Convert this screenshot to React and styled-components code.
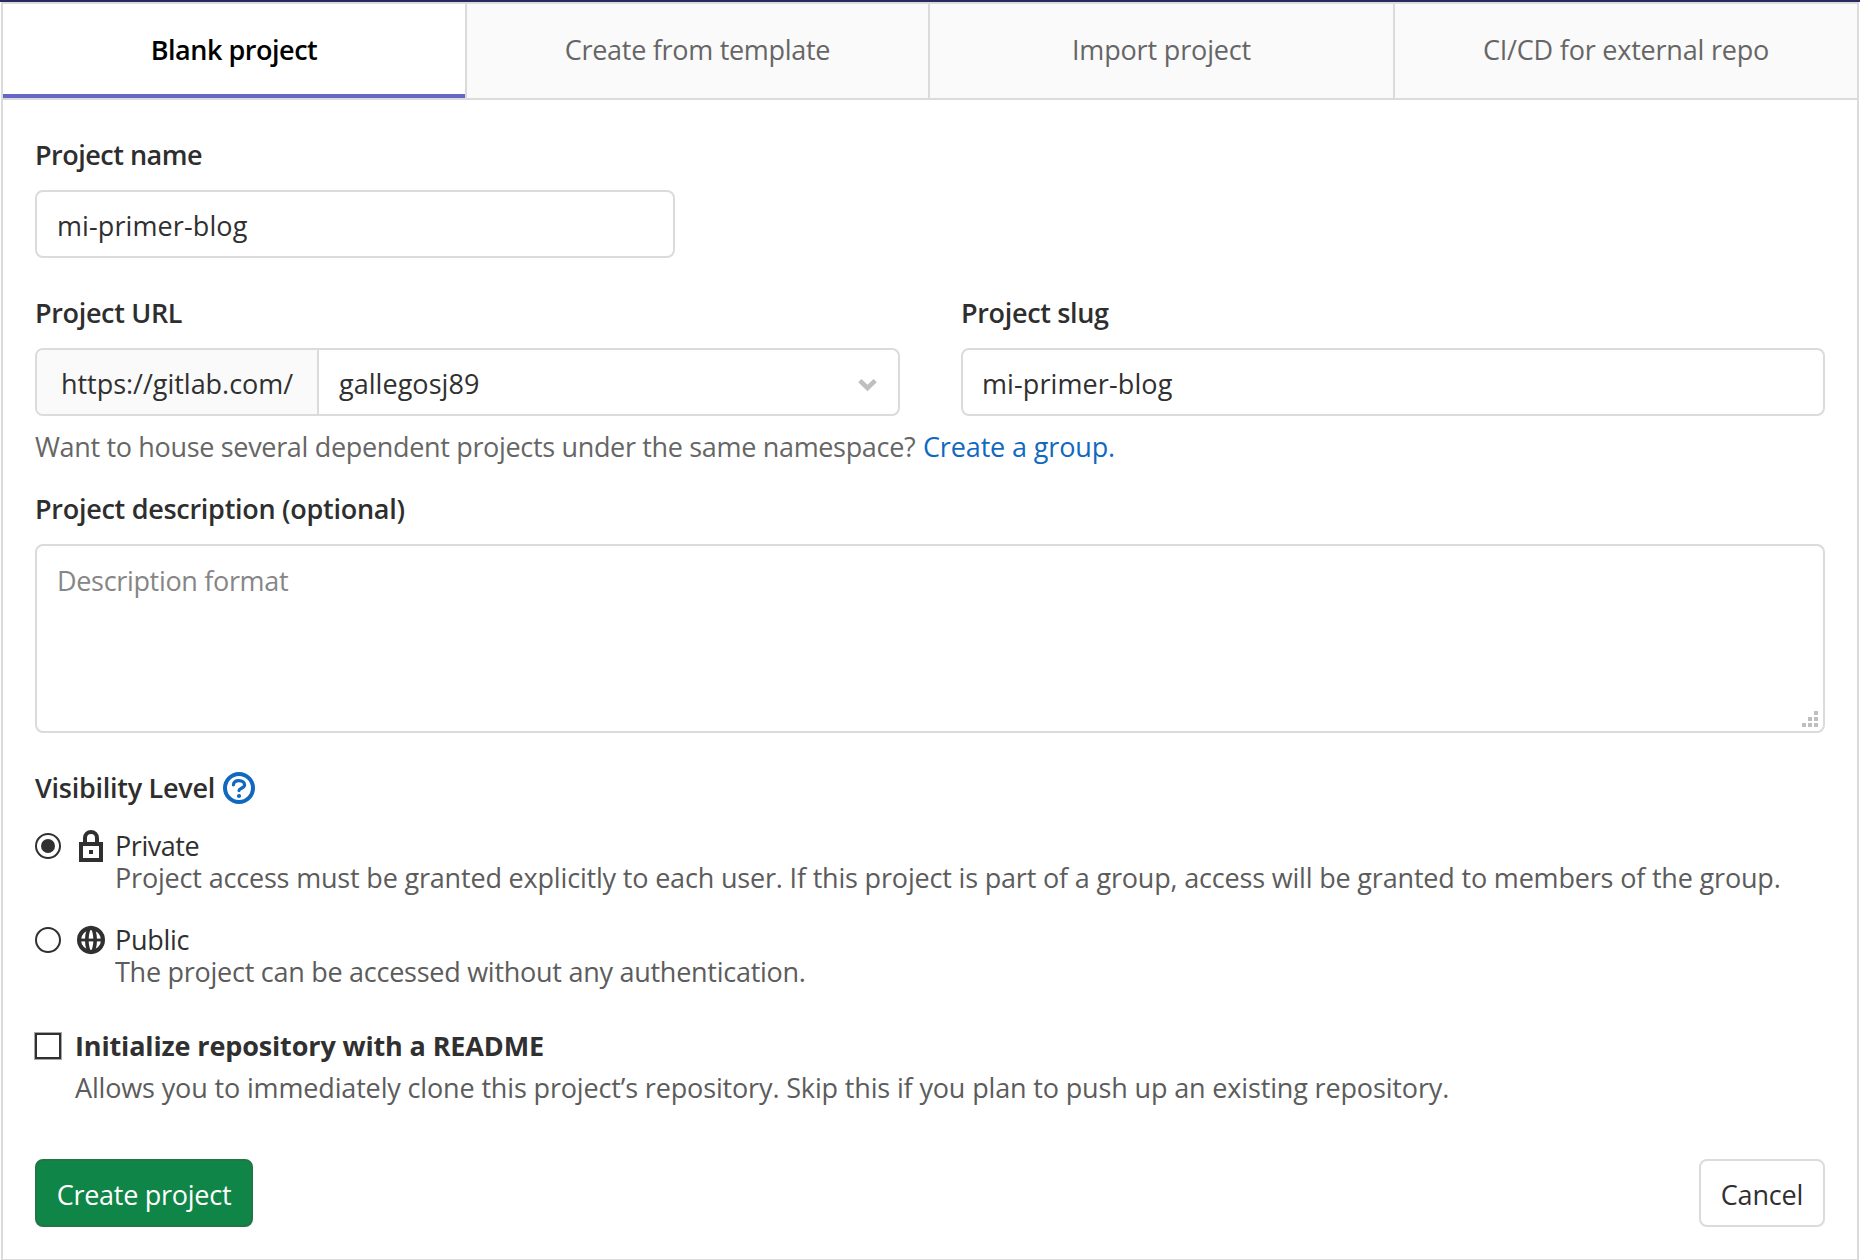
import React from "react";
import styled, { createGlobalStyle } from "styled-components";

const GlobalStyle = createGlobalStyle`
  *, *::before, *::after { box-sizing: border-box; }
  body {
    margin: 0;
    background: #fff;
    color: #303030;
    font-family: "Open Sans", "Noto Sans", sans-serif;
    font-size: 27px;
    line-height: 39px;
    white-space: nowrap;
  }
  input, textarea, button { font: inherit; color: inherit; }
`;

const spacing = (p) => `${p.$track || 0}px`;

const TopBar = styled.div`
  height: 2px;
  background: #292961;
`;
const Panel = styled.main`
  margin: 0 1px;
  height: 1258px;
  border: 2px solid #dbdbdb;
  border-bottom-width: 1px;
`;
const Tabs = styled.nav`
  display: grid;
  grid-template-columns: 464px 463px 465px 462px;
  height: 96px;
  border-bottom: 2px solid #dbdbdb;
`;
const Tab = styled.a`
  display: flex;
  justify-content: center;
  padding-top: 26px;
  border-right: 2px solid #dbdbdb;
  background: ${(p) => (p.$active ? "#fff" : "#fafafa")};
  color: ${(p) => (p.$active ? "#000" : "#666")};
  font-weight: ${(p) => (p.$active ? 600 : 400)};
  letter-spacing: ${spacing};
  box-shadow: ${(p) => (p.$active ? "inset 0 -4px #6666c4" : "none")};
  &:last-child { border-right: 0; }
`;
const Form = styled.form`
  padding: 35px 32px 0;
`;
const Field = styled.div`
  display: flex;
  flex-direction: column;
  gap: 16px;
  width: ${(p) => (p.$width ? `${p.$width}px` : "auto")};
`;
const Columns = styled.div`
  display: flex;
  justify-content: space-between;
  margin-top: 35px;
`;
const Label = styled.label`
  font-weight: 600;
  color: #2e2e2e;
  letter-spacing: ${spacing};
`;
const Input = styled.input`
  width: 100%;
  height: 68px;
  padding: 14px 19px 11px ${(p) => p.$indent || 19}px;
  border: 2px solid #dbdbdb;
  border-radius: 8px;
  background: #fff;
  outline: none;
  letter-spacing: ${spacing};
`;
const Group = styled.div`
  display: flex;
  height: 68px;
  border: 2px solid #dbdbdb;
  border-radius: 8px;
  overflow: hidden;
`;
const Prefix = styled.span`
  width: 282px;
  padding: 14px 0 0 24px;
  border-right: 2px solid #dbdbdb;
  background: #fafafa;
  letter-spacing: ${spacing};
`;
const Select = styled.div`
  flex: 1;
  display: flex;
  justify-content: space-between;
  padding: 14px 21px 0 20px;
  letter-spacing: ${spacing};
  svg { margin-top: 15px; }
`;
const Help = styled.p`
  margin: 11px 0 23px;
  color: #666;
  letter-spacing: ${spacing};
`;
const Link = styled.a`
  margin-left: 1px;
  color: #1068bf;
  letter-spacing: ${spacing};
`;
const AreaWrap = styled.div`
  position: relative;
  display: flex;
`;
const Area = styled.textarea`
  width: 100%;
  height: 189px;
  padding: 15px 20px;
  border: 2px solid #dbdbdb;
  border-radius: 8px;
  resize: none;
  outline: none;
  letter-spacing: ${spacing};
  &::placeholder { color: #868686; opacity: 1; }
`;
const Grip = styled.svg`
  position: absolute;
  right: 7px;
  bottom: 6px;
  fill: #bfbfbf;
`;
const LevelHead = styled.div`
  display: flex;
  gap: 8px;
  margin-top: 35px;
  svg { margin-top: 4px; }
`;
const Option = styled.label`
  display: grid;
  grid-template-columns: 40px 40px 1fr;
  margin-top: ${(p) => p.$top}px;
`;
const Radio = styled.span`
  display: grid;
  place-items: center;
  width: 26px;
  height: 26px;
  margin-top: 3px;
  border: 2px solid #303030;
  border-radius: 50%;
  &::after {
    content: "";
    width: 14px;
    height: 14px;
    border-radius: 50%;
    background: ${(p) => (p.$checked ? "#303030" : "transparent")};
  }
`;
const OptionText = styled.span`
  display: grid;
  gap: 1px;
  line-height: 31px;
`;
const Line = styled.span`
  color: ${(p) => (p.$muted ? "#5c5c5c" : "#303030")};
  font-weight: ${(p) => (p.$bold ? 700 : 400)};
  letter-spacing: ${spacing};
`;
const Readme = styled.label`
  display: grid;
  grid-template-columns: 40px 1fr;
  margin-top: 39px;
`;
const Checkbox = styled.span`
  width: 28px;
  height: 28px;
  margin: 6px 0 0 -1px;
  border: 1px solid #a6a6a6;
  box-shadow: inset 0 0 0 2px #303030;
  background: #fff;
`;
const ReadmeText = styled.span`
  display: grid;
  gap: 3px;
`;
const Actions = styled.div`
  display: flex;
  justify-content: space-between;
  margin-top: 52px;
`;
const Button = styled.button`
  width: ${(p) => p.$width}px;
  height: 68px;
  padding: 3px 0 0;
  border: 2px solid ${(p) => (p.$primary ? "#217645" : "#dbdbdb")};
  border-radius: 8px;
  background: ${(p) => (p.$primary ? "#108548" : "#fff")};
  color: ${(p) => (p.$primary ? "#fff" : "#303030")};
  letter-spacing: ${spacing};
`;

const Chevron = () => (
  <svg width="19" height="13" viewBox="0 0 19 13" fill="none" stroke="#bfbfbf" strokeWidth="4.6">
    <path d="M1.8 1.7 9.5 9 17.2 1.7" />
  </svg>
);
const QuestionIcon = () => (
  <svg width="32" height="32" viewBox="0 0 16 16" fill="none" stroke="#1068bf">
    <circle cx="8" cy="8" r="7" strokeWidth="2" />
    <path d="M5.2 6.4C5.3 5.1 6.4 4.3 8 4.3s2.8.9 2.8 2.2C10.8 8.1 8 8.1 8 9.3" strokeWidth="1.6" strokeLinecap="round" />
    <circle cx="8" cy="12" r="1.05" fill="#1068bf" stroke="none" />
  </svg>
);
const LockIcon = () => (
  <svg width="32" height="32" viewBox="0 0 16 16" fill="none" stroke="#303030" strokeWidth="2">
    <path d="M3 7h10v8H3zM5 7V4a3 3 0 0 1 6 0v3" />
    <path d="M7 10h2v2H7z" fill="#303030" stroke="none" />
  </svg>
);
const GlobeIcon = () => (
  <svg width="32" height="32" viewBox="0 0 16 16" fill="none" stroke="#303030">
    <circle cx="8" cy="8" r="6" strokeWidth="2" />
    <ellipse cx="8" cy="8" rx="2.1" ry="6.2" strokeWidth="1.8" />
    <path d="M2 8h12" strokeWidth="1.4" />
  </svg>
);

const tabs = [
  { text: "Blank project", track: -0.47, active: true },
  { text: "Create from template", track: -0.295 },
  { text: "Import project", track: -0.15 },
  { text: "CI/CD for external repo", track: -0.21 },
];

export default function App() {
  return (
    <>
      <GlobalStyle />
      <TopBar />
      <Panel>
        <Tabs>
          {tabs.map((t) => (
            <Tab key={t.text} $active={t.active} $track={t.track}>{t.text}</Tab>
          ))}
        </Tabs>
        <Form>
          <Field $width={640}>
            <Label $track={-0.5}>Project name</Label>
            <Input $track={0.105} $indent={20} defaultValue="mi-primer-blog" />
          </Field>
          <Columns>
            <Field $width={865}>
              <Label $track={-0.34}>Project URL</Label>
              <Group>
                <Prefix $track={-0.03}>https://gitlab.com/</Prefix>
                <Select $track={0.04}>
                  <span>gallegosj89</span>
                  <Chevron />
                </Select>
              </Group>
            </Field>
            <Field $width={864}>
              <Label $track={-0.33}>Project slug</Label>
              <Input $track={0.105} defaultValue="mi-primer-blog" />
            </Field>
          </Columns>
          <Help $track={-0.33}>
            Want to house several dependent projects under the same namespace?{" "}
            <Link $track={-0.14}>Create a group.</Link>
          </Help>
          <Field>
            <Label $track={-0.28}>Project description (optional)</Label>
            <AreaWrap>
              <Area $track={-0.33} placeholder="Description format" />
              <Grip width="16" height="16" viewBox="0 0 16 16">
                <path d="M12 0h4v4h-4zM6 6h4v4H6zM12 6h4v4h-4zM0 12h4v4H0zM6 12h4v4H6zM12 12h4v4h-4z" />
              </Grip>
            </AreaWrap>
          </Field>
          <LevelHead>
            <Label $track={-0.27}>Visibility Level</Label>
            <QuestionIcon />
          </LevelHead>
          <Option $top={23}>
            <Radio $checked />
            <LockIcon />
            <OptionText>
              <Line $track={-0.45}>Private</Line>
              <Line $muted $track={-0.18}>
                Project access must be granted explicitly to each user. If this project is part of a group, access will be granted to members of the group.
              </Line>
            </OptionText>
          </Option>
          <Option $top={31}>
            <Radio />
            <GlobeIcon />
            <OptionText>
              <Line $track={-0.3}>Public</Line>
              <Line $muted $track={-0.265}>The project can be accessed without any authentication.</Line>
            </OptionText>
          </Option>
          <Readme>
            <Checkbox />
            <ReadmeText>
              <Line $bold $track={-0.14}>Initialize repository with a README</Line>
              <Line $muted $track={-0.149}>
                Allows you to immediately clone this project’s repository. Skip this if you plan to push up an existing repository.
              </Line>
            </ReadmeText>
          </Readme>
          <Actions>
            <Button type="button" $primary $width={218} $track={-0.27}>Create project</Button>
            <Button type="button" $width={126} $track={-0.16}>Cancel</Button>
          </Actions>
        </Form>
      </Panel>
    </>
  );
}
